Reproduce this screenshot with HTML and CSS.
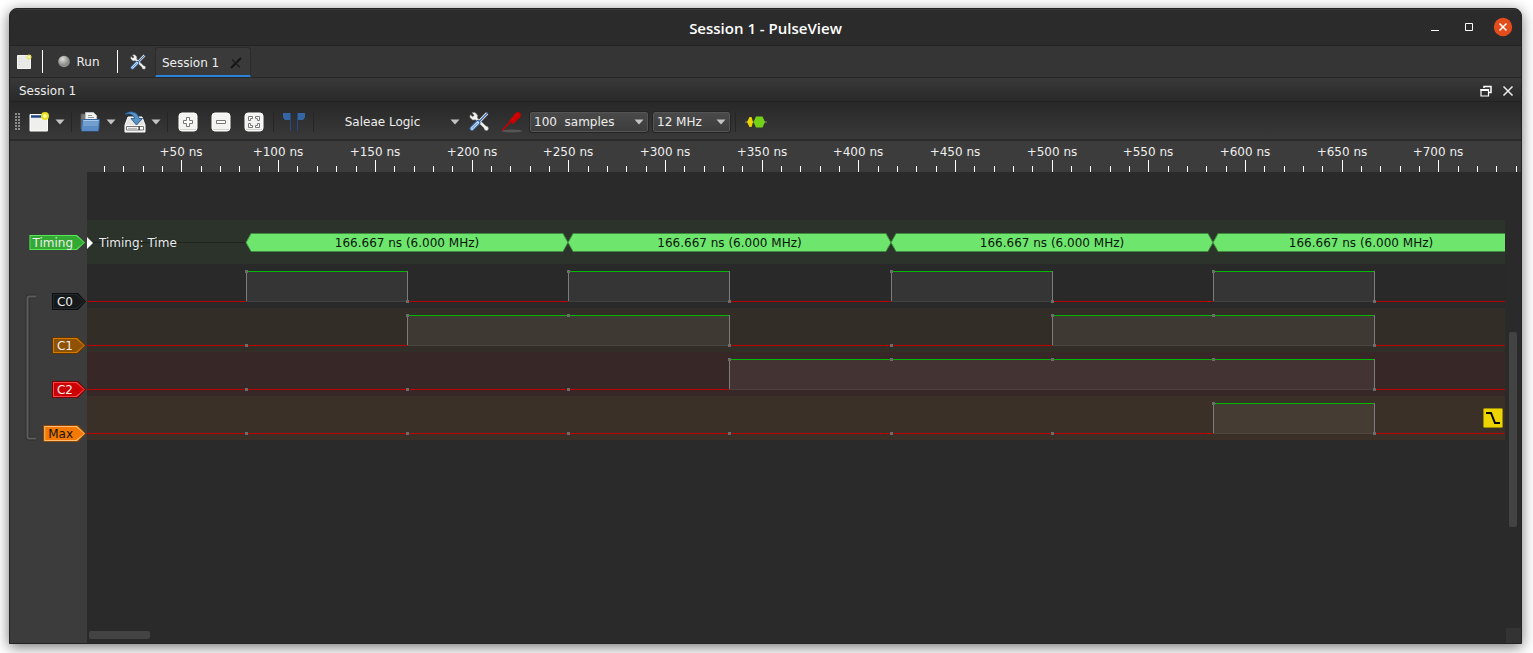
FILE: index.html
```html
<!DOCTYPE html>
<html lang="en">
<head>
<meta charset="utf-8">
<title>Session 1 - PulseView</title>
<link rel="stylesheet" href="styles.css">
</head>
<body>
<svg class="defs" aria-hidden="true">
  <symbol id="tools" viewBox="0 0 20 20">
    <path d="M3 1.2 6 1l2.600 2.800-.3 2.600 8.600 8.200 2 .6.6 2.300-1.500 1.700-2.400-.7-.6-2L6.400 8.200 3.800 8.600.9 6l.3-2.800L3.700 5.300 5.200 3.800z" fill="#f4f4f2" stroke="#8b8d89" stroke-width=".5"/>
    <path d="M18.200 1.800 10.500 9.700" stroke="#fff" stroke-width="3"/>
    <path d="M18.800 1.300 10 10.200" stroke="#3465a4" stroke-width="1.300"/>
    <path d="M9 11 3 17" stroke="#3465a4" stroke-width="5" stroke-linecap="round"/>
    <path d="M8.800 11.200 3 17" stroke="#c3d8ee" stroke-width="3" stroke-linecap="round"/>
    <path d="M8.500 11.500 3 17" stroke="#5585c0" stroke-width="1"/>
  </symbol>
  <symbol id="down" viewBox="0 0 10 6"><path d="M.5.5h9L5 5.500z" fill="#c4c4c4"/></symbol>
  <symbol id="key" viewBox="0 0 20 20"><rect x="1" y="1" width="18" height="18" rx="3" fill="#f3f3f1" stroke="#fff"/><path d="M2 17.500h16" stroke="#d5d5d0"/></symbol>
</svg>
<main class="window">
  <header class="titlebar">
    <h1>Session 1 - PulseView</h1>
    <div class="window-buttons">
      <button aria-label="Minimize"><svg width="20" height="20"><path d="M6 13.500h8" stroke="#fff"/></svg></button>
      <button aria-label="Maximize"><svg width="20" height="20"><path d="M6.500 6.500h7v7h-7z" fill="none" stroke="#fff"/></svg></button>
      <button aria-label="Close"><svg width="20" height="20"><circle cx="10" cy="10" r="9.200" fill="#e34c1b"/><path d="m6.500 6.500 7 7m0-7-7 7" stroke="#fff" stroke-width="1.500"/></svg></button>
    </div>
  </header>

  <nav class="tabbar">
    <button class="new-session" aria-label="New session"><svg width="15" height="16"><path d="M.5 1.500h13v13H.5z" fill="#e9e9e7" stroke="#f6f6f5"/><path d="M2.500 4v9" stroke="#d0d0d0" stroke-dasharray="1 2"/><circle cx="12" cy="3" r="2.500" fill="#e9e36a"/><circle cx="12" cy="3" r="1" fill="#fffdc0"/></svg></button>
    <span class="bar"></span>
    <button class="run"><svg width="12" height="14"><defs><radialGradient id="led" cx=".38" cy=".3"><stop offset="0" stop-color="#e0e0dc"/><stop offset="1" stop-color="#8d8f8a"/></radialGradient></defs><circle cx="6" cy="6.500" r="5.800" fill="url(#led)"/></svg>Run</button>
    <span class="bar"></span>
    <button class="settings" aria-label="Settings"><svg width="16" height="16"><use href="#tools"/></svg></button>
    <div class="tab">
      <button>Session 1</button>
      <button aria-label="Close tab"><svg width="12" height="12"><path d="M1 11 11 1" stroke="#141414" stroke-width="2"/><path d="m2 2.500 8 8" stroke="#1c1c1c" stroke-width="1.200"/></svg></button>
    </div>
  </nav>

  <div class="dock-title">
    <h2>Session 1</h2>
    <button aria-label="Float"><svg width="12" height="12"><path d="M4 3V1.500h7v6H9" fill="none" stroke="#fff" stroke-width="1.500"/><path d="M1 4.500h7.500v6.500H1z" fill="none" stroke="#fff" stroke-width="1.200"/><path d="M.5 5h8.500" stroke="#fff" stroke-width="2"/></svg></button>
    <button aria-label="Close dock"><svg width="12" height="12"><path d="m1.500 1.500 9 9m0-9-9 9" stroke="#eee" stroke-width="1.500"/></svg></button>
  </div>

  <div class="toolbar">
    <svg class="handle" width="15" height="20"><path d="M6 1v18M9 1v18" stroke="#8c8c8c" stroke-width="2" stroke-dasharray="2 1" fill="none"/></svg>
    <button class="icon" aria-label="New"><svg width="20" height="20"><path d="M1 2.500h17.500v16.500H1z" fill="#efefed" stroke="#fff"/><path d="M2 4.500h14" stroke="#204a87" stroke-width="2.400"/><circle cx="16" cy="4" r="4" fill="#e9de20"/><circle cx="16" cy="4" r="2" fill="#fffb9a"/></svg></button>
    <button class="arrow" aria-label="New options"><svg width="10" height="6"><use href="#down"/></svg></button>
    <span class="sep"></span>
    <button class="icon" aria-label="Open"><svg width="20" height="20"><path d="M1 2h6l1 2h9v13H1z" fill="#777b78" stroke="#555"/><path d="M5.500.5h8l3 3V12h-11z" fill="#f1f1ef" stroke="#bbb"/><path d="M8 3.500h4M8 5.500h6" stroke="#999"/><path d="M2.500 7.500h17L18.500 19h-17z" fill="#729fcf" stroke="#3465a4"/><path d="M3.500 8.500h15" stroke="#a8c8e8"/><path d="M2.500 14h16l-.5 4.500H2z" fill="#5a8cc6"/></svg></button>
    <button class="arrow" aria-label="Open options"><svg width="10" height="6"><use href="#down"/></svg></button>
    <span class="gap"></span>
    <button class="icon" aria-label="Save"><svg width="22" height="22"><path d="m4 6-3 8v7h20v-7l-3-8z" fill="#e5e5e2" stroke="#fff"/><path d="M2 14h18v6.500H2z" fill="#f8f8f7"/><path d="M2.500 15.500h17v3.500h-17z" fill="#fff" stroke="#777"/><path d="M4 17.300h9" stroke="#aaa"/><path d="M14.500 15.500h1.200V19h-1.200z" fill="#111"/><path d="M1 3.500C3-.5 14-.8 15 7.500h3.500L12.500 14 7 7.500h3.500C10 3.500 5 2 1 3.500z" fill="#5692c4" stroke="#204a87" stroke-width=".8"/></svg></button>
    <button class="arrow" aria-label="Save options"><svg width="10" height="6"><use href="#down"/></svg></button>
    <span class="sep"></span>
    <button class="zoom" aria-label="Zoom in"><svg width="20" height="20"><use href="#key"/><path d="M8.500 5.500h3v3h3v3h-3v3h-3v-3h-3v-3h3z" fill="#fff" stroke="#777"/></svg></button>
    <span class="nudge"></span>
    <button class="zoom" aria-label="Zoom out"><svg width="20" height="20"><use href="#key"/><path d="M5.500 8.500h9v3h-9z" fill="#fff" stroke="#777"/></svg></button>
    <span class="nudge"></span>
    <button class="zoom" aria-label="Zoom to fit"><svg width="20" height="20"><use href="#key"/><path d="M4.500 4.500h4v2h-2v2h-2zM11.500 4.500h4v4h-2v-2h-2zM4.500 11.500h2v2h2v2h-4zM13.500 11.500h2v4h-4v-2h2z" fill="#fff" stroke="#777"/></svg></button>
    <span class="sep"></span>
    <button class="zoom" aria-label="Show cursors"><svg width="22" height="20"><path d="M0 1h8v18H7V8H2L0 5.500z" fill="#3465a4"/><path d="M22 1h-8v18h1V8h5l2-2.500z" fill="#3465a4"/><path d="M7.500 1v18M14.500 1v18" stroke="#204a87"/></svg></button>
    <span class="sep"></span>
    <button class="device">Saleae Logic</button>
    <button class="arrow" aria-label="Choose device"><svg width="10" height="6"><use href="#down"/></svg></button>
    <button class="wide" aria-label="Configure device"><svg width="20" height="21"><use href="#tools"/></svg></button>
    <button class="wide" aria-label="Configure channels"><svg width="22" height="22"><ellipse cx="11" cy="20" rx="10.500" ry="1.400" fill="#555"/><path d="M1 19.500 12 8" stroke="#c00" stroke-width="1.500"/><path d="m8 10 7-8.500 3-.5 2 2-.5 3L12 13z" fill="#c00"/><path d="m11 9 7-7" stroke="#e01515" stroke-dasharray="1 1"/></svg></button>
    <label class="combo samples"><select aria-label="Sample count"><option>100&nbsp; samples</option></select><svg width="10" height="6"><use href="#down"/></svg></label>
    <label class="combo"><select aria-label="Sample rate"><option>12 MHz</option></select><svg width="10" height="6"><use href="#down"/></svg></label>
    <span class="sep"></span>
    <button class="zoom" aria-label="Add protocol decoder"><svg width="22" height="14"><path d="M0 7h22" stroke="#888"/><path d="m2 7 2.500-5h2L8 7l-1.500 5h-2z" fill="#edd400"/><path d="m8.500 7 2.500-5.500h6.500L20 7l-2.500 5.500H11z" fill="#73d216"/></svg></button>
  </div>

  <svg class="ruler" id="ruler"></svg>

  <section class="view">
    <div class="lanes">
      <svg class="group" width="12" height="148"><path d="M11 2.500H4Q2.500 2.500 2.500 4v139q0 1.500 1.500 1.500h7" fill="none" stroke="#2e2e2e" stroke-width="4"/><path d="M11 2.500H4Q2.500 2.500 2.500 4v139q0 1.500 1.500 1.500h7" fill="none" stroke="#5c5c5a" stroke-width="2"/></svg>
      <div class="lane decoder">
        <div class="gutter"><button class="flag timing">Timing</button></div>
        <div class="trace">
          <svg class="plot" id="timing"></svg>
          <div class="row-name"><svg width="7" height="12"><path d="M0 0 6 6 0 12z" fill="#fff"/></svg><span>Timing: Time</span></div>
        </div>
      </div>
      <div class="lane c0">
        <div class="gutter"><button class="flag">C0</button></div>
        <div class="trace"><svg class="plot" data-bits="010101010"></svg></div>
      </div>
      <div class="lane c1">
        <div class="gutter"><button class="flag">C1</button></div>
        <div class="trace"><svg class="plot" data-bits="001100110"></svg></div>
      </div>
      <div class="lane c2">
        <div class="gutter"><button class="flag">C2</button></div>
        <div class="trace"><svg class="plot" data-bits="000011110"></svg></div>
      </div>
      <div class="lane max">
        <div class="gutter"><button class="flag">Max</button></div>
        <div class="trace"><svg class="plot" data-bits="000000010"></svg>
          <button class="trigger" aria-label="Falling edge trigger"><svg width="20" height="20"><rect x=".5" y=".5" width="19" height="19" rx="1" fill="#edd400" stroke="#9c8c00"/><path d="M3 5h5l4 10h5" fill="none" stroke="#000" stroke-width="2"/></svg></button>
        </div>
      </div>
    </div>
    <div class="vscroll"><span></span></div>
    <div class="hscroll"><span></span></div>
    <div class="corner"></div>
  </section>
</main>
<script src="script.js"></script>
</body>
</html>
```
FILE: styles.css
```css
* { box-sizing: border-box; }
body {
  margin: 0;
  min-height: 100vh;
  padding: 8px 11px 9px 9px;
  display: flex;
  background: #fff;
  color: #eee;
  font: 12px/16px "DejaVu Sans", sans-serif;
}
button, select { margin: 0; padding: 0; border: 0; background: none; color: inherit; font: inherit; }
button { display: flex; align-items: center; justify-content: center; }
svg { display: block; flex: none; }
h1, h2 { margin: 0; font-size: 12px; font-weight: 400; }
.defs { position: absolute; width: 0; height: 0; }

.window {
  flex: 1;
  min-width: 0;
  display: flex;
  flex-direction: column;
  border: 1px solid #232323;
  border-radius: 8px 8px 0 0;
  background: #2a2a2a;
  box-shadow: 0 3px 14px rgba(0, 0, 0, .55);
  overflow: hidden;
}

.titlebar {
  height: 37px;
  display: grid;
  grid-template-columns: 1fr auto 1fr;
  align-items: center;
  background: #2b2b2b;
  border-top: 1px solid #3a3a3a;
  border-bottom: 1px solid #222;
}
.titlebar h1 { grid-column: 2; font: 600 15px/20px "Open Sans", sans-serif; color: #fff; }
.window-buttons { display: flex; justify-content: flex-end; gap: 14px; padding: 0 8px 2px 0; }

.tabbar { height: 32px; display: flex; align-items: center; background: #353535; border-bottom: 1px solid #262626; }
.new-session { width: 31px; padding-right: 2px; }
.bar { width: 2px; height: 23px; border-right: 1px solid #fff; }
.run { width: 73px; gap: 6px; padding-right: 1px; }
.settings { width: 37px; padding-left: 3px; }
.tab {
  align-self: stretch;
  display: flex;
  align-items: center;
  gap: 11px;
  margin-top: 1px;
  padding: 2px 8px 0 6px;
  border: 1px solid #2b2b2b;
  border-bottom: 2px solid #2a82da;
  border-radius: 3px 3px 0 0;
  background: #3a3a3a;
}

.dock-title {
  height: 24px;
  display: flex;
  align-items: center;
  gap: 10px;
  padding: 2px 7px 0 9px;
  background: linear-gradient(#393939, #292929);
  border-bottom: 1px solid #222;
}
.dock-title h2 { flex: 1; }

.toolbar {
  height: 39px;
  display: flex;
  align-items: center;
  padding-top: 2px;
  background: linear-gradient(#282828, #393939);
  border-bottom: 2px solid #2b2b2b;
}
.toolbar > * { flex: none; }
.toolbar button { height: 28px; }
.icon { width: 27px; }
.arrow { width: 15px; }
.zoom { width: 31px; }
.wide { width: 33px; }
.gap { width: 3px; }
.nudge { width: 2px; }
.device { width: 129px; }
.sep { width: 9px; height: 20px; background: linear-gradient(#262626, #262626) center / 1px 100% no-repeat; }
.combo {
  width: 79px;
  height: 22px;
  margin-left: 3px;
  display: flex;
  align-items: center;
  padding-right: 4px;
  border: 1px solid #242424;
  border-radius: 3px;
  background: linear-gradient(#4a4a4a, #3c3c3c);
  box-shadow: inset 0 0 0 1px #555;
}
.samples { width: 120px; margin-left: 1px; }
.combo select { flex: 1; min-width: 0; padding-left: 4px; appearance: none; outline: 0; }

.ruler { width: 100%; height: 31px; background: #3c3c3c; }
.ruler text { fill: #eee; text-anchor: middle; }
.ruler rect { fill: #fff; }

.view {
  flex: 1;
  display: grid;
  grid-template-columns: 77px 1fr 16px;
  grid-template-rows: 1fr 16px;
  background: linear-gradient(90deg, #3c3c3c 77px, #2a2a2a 77px);
}
.lanes { grid-column: 1 / 3; position: relative; padding-top: 48px; }
.group { position: absolute; left: 15px; top: 122px; }
.lane { display: flex; height: 44px; }
.gutter { flex: none; width: 77px; display: flex; justify-content: flex-end; align-items: flex-end; padding-right: 1px; }
.decoder .gutter { align-items: center; padding: 1px 2px 0 0; }
.trace { flex: 1; min-width: 0; position: relative; background: var(--lane); }
.plot { width: 100%; height: 44px; }
.plot text { fill: #0c140c; text-anchor: middle; }

.decoder { --lane: #2b332b; --edge: #55e855; --fill: #33a933; --outline: #33a933; }
.c0 { --lane: #292929; --edge: #23292b; --fill: #16191a; --outline: #0b0d0e; }
.c1 { --lane: #322d27; --edge: #d77a00; --fill: #8f5202; --outline: #5c3500; }
.c2 { --lane: #382727; --edge: #ff4545; --fill: #cc0000; --outline: #750000; }
.max { --lane: #3a3027; --edge: #ffbe73; --fill: #f57900; --outline: #8f4700; }

.flag {
  position: relative;
  z-index: 0;
  height: 17px;
  margin-bottom: -2px;
  padding: 0 13px 0 5px;
  background: var(--outline);
}
.flag, .flag::before, .flag::after {
  clip-path: polygon(0 0, calc(100% - 8px) 0, 100% 50%, calc(100% - 8px) 100%, 0 100%);
}
.flag::before, .flag::after { content: ""; position: absolute; z-index: -1; }
.flag::before { inset: 1px; background: var(--edge); }
.flag::after { inset: 2px; background: var(--fill); }
.flag.timing { height: 15px; margin: 0; padding: 0 12px 0 3px; background: var(--edge); }
.flag.timing::after { inset: 1px; }
.max .flag { color: #111; }

.row-name { position: absolute; left: 0; top: 15px; display: flex; align-items: center; gap: 5px; }
.row-name span { text-shadow: 0 0 1px #111; }
.trigger { position: absolute; right: 2px; top: 12px; }

.vscroll { display: grid; grid-template-rows: 160fr 196fr 100fr; justify-content: center; }
.vscroll span { grid-row: 2; width: 8px; border-radius: 2px; background: #434343; }
.hscroll { grid-column: 2; padding: 4px 2px; }
.hscroll span { display: block; width: 61px; height: 8px; border-radius: 2px; background: #434343; }
.corner { margin: 1px 0 0 1px; background: #333; }
```
FILE: script.js
```js
// Horizontal scale shared by the ruler and all traces.
const SCALE = 1.9338;      // pixels per nanosecond
const ORIGIN = 74.78;      // time zero, measured from the window's inner edge
const GUTTER = 77;         // width of the channel label column
const HALF_PERIOD = 83.333;

const NS = "http://www.w3.org/2000/svg";
function add(parent, tag, attrs, text) {
  const node = document.createElementNS(NS, tag);
  for (const key in attrs) node.setAttribute(key, attrs[key]);
  if (text) node.textContent = text;
  parent.appendChild(node);
}
function rect(parent, x, y, width, height, fill) {
  add(parent, "rect", { x, y, width, height, fill });
}
const edgeX = (i) => Math.round(ORIGIN + i * HALF_PERIOD * SCALE) - GUTTER;

function drawRuler() {
  const ruler = document.getElementById("ruler");
  ruler.replaceChildren();
  for (let k = 1; ; k++) {
    const x = Math.round(ORIGIN + k * 10 * SCALE);
    if (x > ruler.clientWidth) break;
    const major = k % 5 === 0;
    rect(ruler, x, major ? 19 : 25, 1, major ? 12 : 6, "#fff");
    if (major) add(ruler, "text", { x, y: 15 }, "+" + k * 10 + " ns");
  }
}

function drawLogic(plot) {
  const bits = plot.dataset.bits;
  const width = plot.clientWidth;
  plot.replaceChildren();
  for (let i = 0; i < bits.length; i++) {
    const x0 = i ? edgeX(i) : 0;
    const x1 = i < bits.length - 1 ? edgeX(i + 1) : width;
    if (bits[i] === "1") {
      rect(plot, x0, 7, x1 - x0, 31, "rgba(255,255,255,.06)");
      rect(plot, x0, 37, x1 - x0, 1, "rgba(255,255,255,.06)");
      rect(plot, x0, 7, x1 - x0, 1, "#00b800");
    } else {
      rect(plot, x0, 37, x1 - x0, 1, "#c00000");
    }
  }
  for (let i = 1; i < bits.length; i++) {
    const x = edgeX(i);
    if (bits[i] !== bits[i - 1]) rect(plot, x, 7, 1, 30, "#7c7c7c");
    rect(plot, x - 1, bits[i] === "1" ? 6 : 36, 3, 3, "#6c6c6c");
  }
}

function drawTiming() {
  const plot = document.getElementById("timing");
  const width = plot.clientWidth;
  plot.replaceChildren();
  rect(plot, 6, 22, edgeX(1) - 6, 1, "#1d231d");
  for (let i = 1; i < 9; i += 2) {
    const x0 = edgeX(i);
    const x1 = i < 7 ? edgeX(i + 2) : width + 8;
    add(plot, "polygon", {
      points: `${x0},22.5 ${x0 + 5},13.5 ${x1 - 5},13.5 ${x1},22.5 ${x1 - 5},31.5 ${x0 + 5},31.5`,
      fill: "#6ee66e", stroke: "#3f8a3f"
    });
    add(plot, "text", { x: (x0 + Math.min(x1, width + 4)) / 2, y: 27 }, "166.667 ns (6.000 MHz)");
  }
}

function draw() {
  drawRuler();
  drawTiming();
  document.querySelectorAll("[data-bits]").forEach(drawLogic);
}
draw();
addEventListener("resize", draw);
```
